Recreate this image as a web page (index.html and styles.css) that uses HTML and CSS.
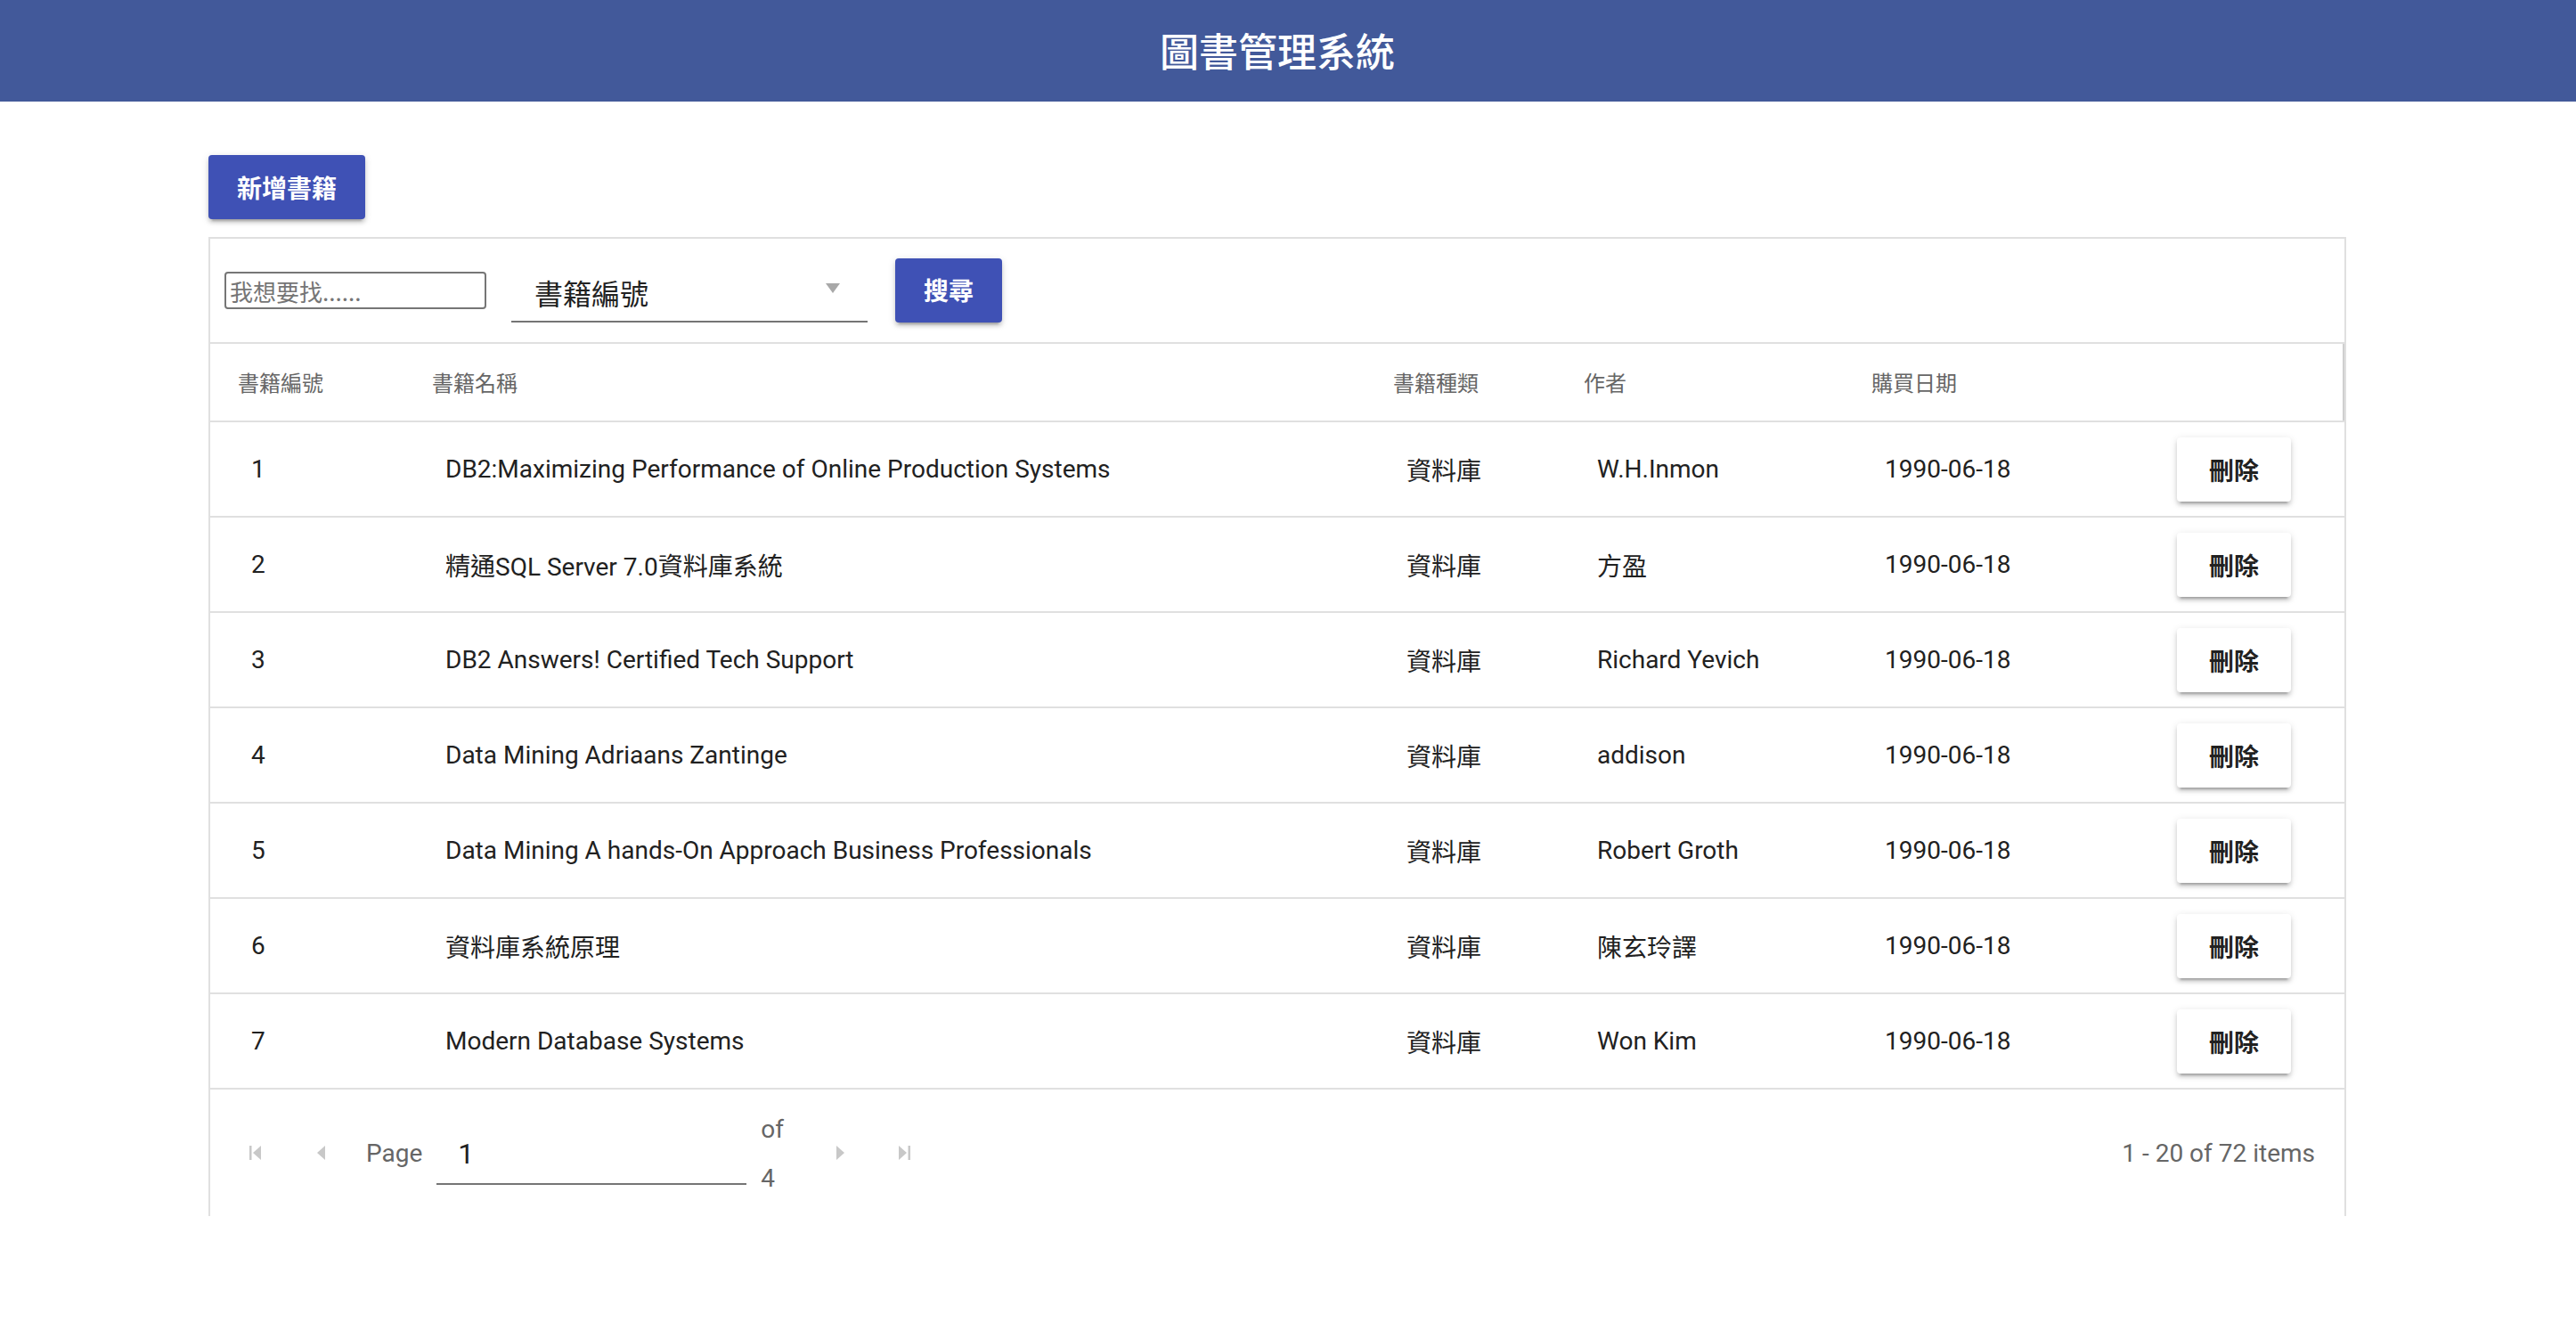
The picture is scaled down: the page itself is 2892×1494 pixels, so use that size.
FILE: index.html
```html
<!DOCTYPE html>
<html lang="zh-Hant">
<head>
<meta charset="utf-8">
<title>圖書管理系統</title>
<link rel="stylesheet" href="styles.css">
</head>
<body>
<header class="topbar"><h1 class="title">圖書管理系統</h1></header>
<main class="main">
  <button class="btn btn-primary btn-add">新增書籍</button>
  <section class="grid">
    <div class="toolbar">
      <input class="search-input" type="text" placeholder="我想要找......">
      <div class="select">
        <span class="select-text">書籍編號</span>
        <svg class="select-arrow" width="16" height="11" viewBox="0 0 16 11"><path d="M0 0H16L8 11Z" fill="#a8a8a8"/></svg>
      </div>
      <button class="btn btn-primary btn-search">搜尋</button>
    </div>
    <div class="row head">
      <div class="cell">書籍編號</div>
      <div class="cell">書籍名稱</div>
      <div class="cell">書籍種類</div>
      <div class="cell">作者</div>
      <div class="cell">購買日期</div>
      <div class="cell"></div>
    </div>
    <div class="row">
      <div class="cell">1</div>
      <div class="cell">DB2:Maximizing Performance of Online Production Systems</div>
      <div class="cell">資料庫</div>
      <div class="cell">W.H.Inmon</div>
      <div class="cell">1990-06-18</div>
      <div class="cell action"><button class="btn btn-del">刪除</button></div>
    </div>
    <div class="row">
      <div class="cell">2</div>
      <div class="cell">精通SQL Server 7.0資料庫系統</div>
      <div class="cell">資料庫</div>
      <div class="cell">方盈</div>
      <div class="cell">1990-06-18</div>
      <div class="cell action"><button class="btn btn-del">刪除</button></div>
    </div>
    <div class="row">
      <div class="cell">3</div>
      <div class="cell">DB2 Answers! Certified Tech Support</div>
      <div class="cell">資料庫</div>
      <div class="cell">Richard Yevich</div>
      <div class="cell">1990-06-18</div>
      <div class="cell action"><button class="btn btn-del">刪除</button></div>
    </div>
    <div class="row">
      <div class="cell">4</div>
      <div class="cell">Data Mining Adriaans Zantinge</div>
      <div class="cell">資料庫</div>
      <div class="cell">addison</div>
      <div class="cell">1990-06-18</div>
      <div class="cell action"><button class="btn btn-del">刪除</button></div>
    </div>
    <div class="row">
      <div class="cell">5</div>
      <div class="cell">Data Mining A hands-On Approach Business Professionals</div>
      <div class="cell">資料庫</div>
      <div class="cell">Robert Groth</div>
      <div class="cell">1990-06-18</div>
      <div class="cell action"><button class="btn btn-del">刪除</button></div>
    </div>
    <div class="row">
      <div class="cell">6</div>
      <div class="cell">資料庫系統原理</div>
      <div class="cell">資料庫</div>
      <div class="cell">陳玄玲譯</div>
      <div class="cell">1990-06-18</div>
      <div class="cell action"><button class="btn btn-del">刪除</button></div>
    </div>
    <div class="row">
      <div class="cell">7</div>
      <div class="cell">Modern Database Systems</div>
      <div class="cell">資料庫</div>
      <div class="cell">Won Kim</div>
      <div class="cell">1990-06-18</div>
      <div class="cell action"><button class="btn btn-del">刪除</button></div>
    </div>
    <div class="pager">
      <span class="pager-nav first"><svg width="14" height="18" viewBox="0 0 14 18"><rect x="0" y="1" width="2.5" height="16" fill="#c8c8c8"/><path d="M13 1V17L4 9Z" fill="#c8c8c8"/></svg></span>
      <span class="pager-nav prev"><svg width="10" height="18" viewBox="0 0 10 18"><path d="M9 1V17L0 9Z" fill="#c8c8c8"/></svg></span>
      <span class="pager-label">Page</span>
      <span class="pager-input">1</span>
      <span class="pager-of"><span>of</span><span>4</span></span>
      <span class="pager-nav next"><svg width="10" height="18" viewBox="0 0 10 18"><path d="M1 1V17L10 9Z" fill="#c8c8c8"/></svg></span>
      <span class="pager-nav last"><svg width="14" height="18" viewBox="0 0 14 18"><path d="M1 1V17L10 9Z" fill="#c8c8c8"/><rect x="11.5" y="1" width="2.5" height="16" fill="#c8c8c8"/></svg></span>
      <span class="pager-info">1 - 20 of 72 items</span>
    </div>
  </section>
</main>
</body>
</html>
```

FILE: styles.css
```css
* { box-sizing: border-box; }
body {
  margin: 0;
  background: #fff;
  font-family: Roboto, "Noto Sans CJK TC", sans-serif;
  color: #212121;
}
.topbar {
  height: 114px;
  background: #42599a;
  display: flex;
  align-items: center;
  justify-content: center;
  padding-right: 24px;
}
.title {
  margin: 0;
  color: #fff;
  font-size: 44px;
  font-weight: 500;
  font-family: "Noto Sans CJK TC", sans-serif;
  line-height: 1;
  padding-bottom: 2px;
}
.main { padding: 60px 0 0 234px; }
.btn {
  border: 0;
  border-radius: 4px;
  font-family: Roboto, "Noto Sans CJK TC", sans-serif;
  font-size: 28px;
  font-weight: 700;
  cursor: pointer;
  display: inline-flex;
  align-items: center;
  justify-content: center;
  padding: 0;
  box-shadow: 0 6px 2px -4px rgba(0,0,0,.2), 0 4px 4px 0 rgba(0,0,0,.14), 0 2px 10px 0 rgba(0,0,0,.12);
}
.btn-primary { background: #3f51b5; color: #fff; }
.btn-add { width: 176px; height: 72px; margin-bottom: 20px; }
.grid {
  width: 2400px;
  border: 2px solid #e0e0e0;
  border-bottom: 0;
}
.toolbar {
  height: 118px;
  border-bottom: 2px solid #e0e0e0;
  display: flex;
  align-items: center;
  padding-left: 16px;
}
.search-input {
  width: 294px;
  height: 42px;
  border: 2px solid #767676;
  border-radius: 4px;
  font-size: 26px;
  padding: 0 4px;
  margin: 0 28px 0 0;
  font-family: "Noto Sans CJK TC", sans-serif;
}
.search-input::placeholder { color: #757575; }
.select {
  width: 400px;
  height: 72px;
  border-bottom: 2px solid #757575;
  display: flex;
  align-items: center;
  padding: 6px 31px 0 26px;
}
.select-text {
  flex: 1;
  font-size: 32px;
  color: #222;
  font-family: "Noto Sans CJK TC", sans-serif;
}
.select-arrow { margin-top: -10px; }
.btn-search { width: 120px; height: 72px; margin-left: 31px; padding-bottom: 2px; }
.row {
  display: grid;
  grid-template-columns: 218px 1079px 214px 323px 323px 1fr;
  padding-left: 7px;
  height: 107px;
  border-bottom: 2px solid #e0e0e0;
  align-items: center;
  font-size: 28px;
}
.row .cell { padding-left: 39px; white-space: nowrap; }
.row.head {
  height: 88px;
  font-size: 24px;
  color: #666;
  box-shadow: inset -2px 0 0 #cfcfcf;
  padding-bottom: 2px;
}
.row.head .cell { padding-left: 24px; }
.row .cell.action { padding-left: 44px; display: flex; align-items: center; }
.btn-del {
  width: 128px;
  height: 72px;
  background: #fff;
  color: #212121;
}
.pager {
  height: 142px;
  display: flex;
  align-items: center;
  padding-left: 31px;
  padding-right: 33px;
  color: #666;
  font-size: 28px;
}
.pager-nav {
  width: 40px;
  height: 40px;
  display: flex;
  align-items: center;
  justify-content: center;
}
.pager-nav.prev { margin-left: 34px; }
.pager-label { margin-left: 30px; }
.pager-input {
  margin-left: 16px;
  width: 348px;
  height: 72px;
  border-bottom: 2px solid #757575;
  display: flex;
  align-items: center;
  padding-left: 24px;
  padding-top: 4px;
  font-size: 32px;
  color: #212121;
}
.pager-of {
  margin-left: 16px;
  display: flex;
  flex-direction: column;
  line-height: 55px;
  padding-top: 2px;
}
.pager-nav.next { margin-left: 43px; }
.pager-nav.last { margin-left: 32px; }
.pager-info { margin-left: auto; }
```
